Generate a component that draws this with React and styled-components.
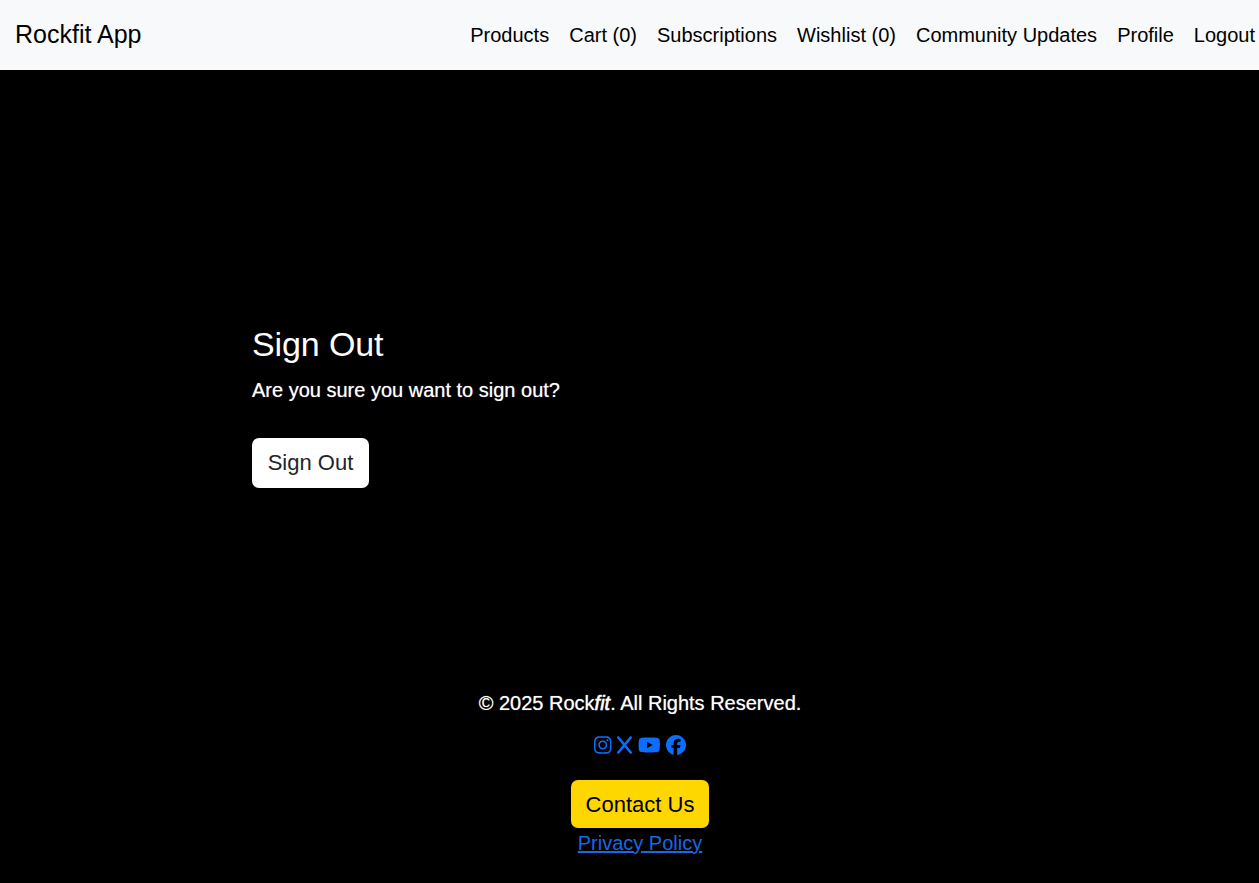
import React from "react";
import styled, { createGlobalStyle } from "styled-components";
import { FaInstagram, FaX, FaYoutube, FaFacebook } from "react-icons/fa6";

const GlobalStyle = createGlobalStyle`
  *, *::before, *::after { box-sizing: border-box; }
  body {
    margin: 0;
    background: #000;
    color: #fff;
    font: 400 20px/30px "Liberation Sans", Arial, sans-serif;
  }
`;

const Page = styled.div`
  display: flex;
  flex-direction: column;
  height: 100vh;
  overflow: hidden;
`;

const Navbar = styled.nav`
  display: flex;
  flex: 0 0 70px;
  align-items: center;
  justify-content: space-between;
  padding: 0 4px 0 15px;
  background: #f8f9fa;
`;

const Brand = styled.a`
  padding-bottom: 2px;
  color: #000;
  font-size: 25px;
`;

const NavLinks = styled.div`
  display: flex;
  gap: 20px;
`;

const NavLink = styled.a`
  color: #000;
  white-space: nowrap;
`;

const Main = styled.main`
  flex: 1;
  padding: 253px 252px 0;
`;

const Title = styled.h1`
  margin: 0 0 10px;
  font-size: 34px;
  font-weight: 400;
  line-height: 42px;
  letter-spacing: -0.12px;
`;

const Text = styled.p`
  margin: 0;
  text-shadow: 0 0 1px rgba(255, 255, 255, 0.6);

  em {
    -webkit-text-stroke: 0.4px currentColor;
  }
`;

const Button = styled.button`
  height: ${({ $primary }) => ($primary ? "48px" : "50px")};
  padding: ${({ $primary }) => ($primary ? "1px 15px 0" : "0 15.7px")};
  border: 0;
  border-radius: 7px;
  background: ${({ $primary }) => ($primary ? "#ffd700" : "#fff")};
  color: ${({ $primary }) => ($primary ? "#000" : "#212529")};
  font: inherit;
  font-size: 22px;
`;

const SignOutButton = styled(Button)`
  margin-top: 33px;
`;

const Footer = styled.footer`
  display: flex;
  flex-direction: column;
  align-items: center;
  padding: 0 0 25px 21px;
`;

const SocialLinks = styled.div`
  display: flex;
  align-items: center;
  gap: 5.56px;
  height: 20px;
  margin: 16.5px 0 25.5px;
  color: #0d6efd;
`;

const SocialIcon = styled.a`
  display: flex;
  width: ${({ $width }) => $width}px;
  height: 20px;

  svg {
    width: 100%;
    height: 100%;
  }
`;

const PolicyLink = styled.a`
  color: #1668e3;
  text-decoration: underline;
`;

const links = [
  "Products",
  "Cart (0)",
  "Subscriptions",
  "Wishlist (0)",
  "Community Updates",
  "Profile",
  "Logout",
];

const socials = [
  { name: "Instagram", Icon: FaInstagram, width: 17.5 },
  { name: "X", Icon: FaX, width: 15 },
  { name: "YouTube", Icon: FaYoutube, width: 22.5 },
  { name: "Facebook", Icon: FaFacebook, width: 20 },
];

export default function App() {
  return (
    <Page>
      <GlobalStyle />
      <Navbar>
        <Brand>Rockfit App</Brand>
        <NavLinks>
          {links.map((label) => (
            <NavLink key={label}>{label}</NavLink>
          ))}
        </NavLinks>
      </Navbar>
      <Main>
        <Title>Sign Out</Title>
        <Text>Are you sure you want to sign out?</Text>
        <SignOutButton>Sign Out</SignOutButton>
      </Main>
      <Footer>
        <Text>
          © 2025 Rock<em>fit</em>. All Rights Reserved.
        </Text>
        <SocialLinks>
          {socials.map(({ name, Icon, width }) => (
            <SocialIcon key={name} $width={width}>
              <Icon />
            </SocialIcon>
          ))}
        </SocialLinks>
        <Button $primary>Contact Us</Button>
        <PolicyLink>Privacy Policy</PolicyLink>
      </Footer>
    </Page>
  );
}
